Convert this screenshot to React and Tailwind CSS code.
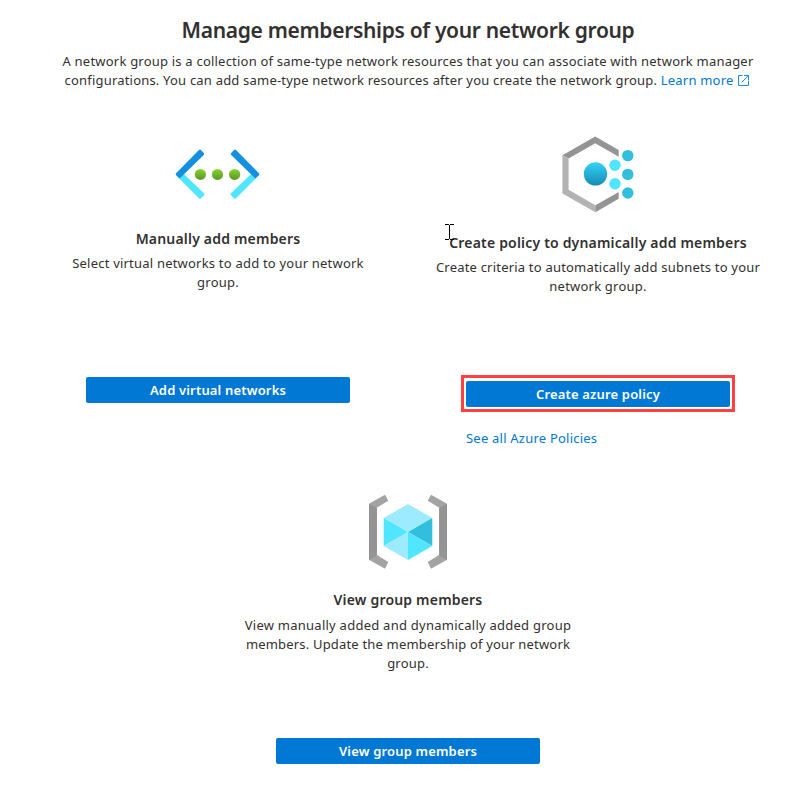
function VirtualNetworkIcon() {
  return (
    <svg width="110" height="80" viewBox="-1 -1 108 80" preserveAspectRatio="none" className="block">
      <defs>
        <linearGradient id="dot" x1="0" y1="0" x2="0" y2="1">
          <stop offset="0" stopColor="#86d633" />
          <stop offset="1" stopColor="#5e9624" />
        </linearGradient>
      </defs>
      <path d="M11.7 40.3 L34.3 63.3 Q35.3 64.2 36.3 63.2 L39.3 60.2 Q40.2 59.2 39.2 58.2 L19.5 39 L15 39Z" fill="#50e6ff" />
      <path d="M93.3 40.3 L70.7 63.3 Q69.7 64.2 68.7 63.2 L65.7 60.2 Q64.8 59.2 65.8 58.2 L85.5 39 L90 39Z" fill="#50e6ff" />
      <path d="M34.3 15 Q35.3 14 36.3 15 L39 18 Q40 19 39 20 L15.3 43.6 L11.8 40.1 Q11 39.2 11.8 38.3Z" fill="#1490df" />
      <path d="M70.7 15 Q69.7 14 68.7 15 L66 18 Q65 19 66 20 L89.7 43.6 L93.2 40.1 Q94 39.2 93.2 38.3Z" fill="#1490df" />
      <circle cx="35.7" cy="39.4" r="5.5" fill="url(#dot)" />
      <circle cx="52.5" cy="39.4" r="5.5" fill="url(#dot)" />
      <circle cx="69.3" cy="39.4" r="5.5" fill="url(#dot)" />
    </svg>
  );
}

function PolicyIcon() {
  return (
    <svg width="100" height="80" viewBox="-2 9 100 80" className="block">
      <defs>
        <linearGradient id="core" x1="0" y1="0" x2="0" y2="1">
          <stop offset="0" stopColor="#32d4f5" />
          <stop offset="1" stopColor="#198ab3" />
        </linearGradient>
      </defs>
      <path d="M12.4 30.3 L45.2 11.5 L68.7 25 V31.8 L45.2 18.3 L18.6 33.6Z" fill="#949494" />
      <path d="M12.4 30.3 L18.6 33.8 V64.7 L45.4 80.3 V87.3 L12.4 68.4Z" fill="#b3b3b3" />
      <path d="M45.4 80.3 L68.7 67 V73.8 L45.4 87.3Z" fill="#949494" />
      <circle cx="45.5" cy="48.9" r="11.7" fill="url(#core)" />
      <circle cx="65" cy="40.3" r="5.7" fill="#50e6ff" />
      <circle cx="65" cy="58.8" r="5.7" fill="#50e6ff" />
      <circle cx="77.8" cy="30.6" r="5.7" fill="#32bedd" />
      <circle cx="77.8" cy="49.4" r="5.7" fill="#32bedd" />
      <circle cx="77.8" cy="68" r="5.7" fill="#32bedd" />
    </svg>
  );
}

function ResourceGroupIcon() {
  return (
    <svg width="110" height="80" viewBox="-2 7 110 80" className="block">
      <path d="M14 18.7 L30 9.8 L33.3 15.8 L22 22.4 V70 L33.3 77 L30 83.8 L14 74.7Z" fill="#a3a3a3" />
      <path d="M14 18.7 L21.8 23 V70.5 L14 74.7Z" fill="#949494" />
      <path d="M92 18.7 L76 9.8 L72.7 15.8 L84 22.4 V70 L72.7 77 L76 83.8 L92 74.7Z" fill="#a3a3a3" />
      <path d="M92 18.7 L84.2 23 V70.5 L92 74.7Z" fill="#949494" />
      <path d="M53 19 L77.3 33 L53 47 L28.7 33Z" fill="#9cebff" />
      <path d="M28.7 33 L53 47 L28.7 61Z" fill="#50e6ff" />
      <path d="M77.3 33 V61 L53 47Z" fill="#32bedd" />
      <path d="M28.7 61 L53 47 V75Z" fill="#9cebff" />
      <path d="M77.3 61 L53 47 V75Z" fill="#50e6ff" />
    </svg>
  );
}

function Heading({ children, className }) {
  return <h2 className={`h-5 text-center text-sm leading-5 font-semibold tracking-[0.19px] whitespace-nowrap ${className}`}>{children}</h2>;
}

function Line({ children, className = "tracking-[0.21px]" }) {
  return <span className={`block whitespace-nowrap ${className}`}>{children}</span>;
}

function Button({ children, className = "" }) {
  return (
    <button className={`flex h-[26px] w-[264px] items-center justify-center rounded-[2px] bg-[#0078d4] pt-[2px] text-[13px] font-semibold tracking-[0.17px] whitespace-nowrap text-white ${className}`}>
      {children}
    </button>
  );
}

export default function App() {
  return (
    <main className="relative h-[797px] w-[808px] overflow-hidden bg-white pt-4 pl-7 font-['Noto_Sans','Open_Sans',sans-serif] text-[#323130]">
      <header className="w-[760px] text-center">
        <h1 className="h-9 text-[21px] leading-[28px] font-semibold tracking-[-0.32px] whitespace-nowrap">Manage memberships of your network group</h1>
        <p className="text-[13px] leading-[19px]">
          <Line>A network group is a collection of same-type network resources that you can associate with network manager</Line>
          <Line className="pr-[3px] tracking-[0.2px]">
            configurations. You can add same-type network resources after you create the network group.{" "}
            <a className="text-[#0078d4]">
              Learn more
              <svg width="11" height="11" viewBox="0 0 11 11" className="ml-[4px] inline-block align-[-1px]" fill="none" stroke="#0078d4" strokeOpacity="0.85">
                <path d="M4.5 .5H.5V10.5H10.5V5.5M6 .5H10.5V5M10.5 .5L3.5 7.5" />
              </svg>
            </a>
          </Line>
        </p>
      </header>

      <div className="mt-[44px] grid h-[358px] w-[760px] grid-cols-2">
        <section className="flex flex-col items-center">
          <VirtualNetworkIcon />
          <Heading className="mt-[15px]">Manually add members</Heading>
          <p className="mt-[5px] text-center text-[13px] leading-[19px]">
            <Line>Select virtual networks to add to your network</Line>
            <Line>group.</Line>
          </p>
          <Button className="mt-[85px]">Add virtual networks</Button>
        </section>
        <section className="flex flex-col items-center">
          <PolicyIcon />
          <Heading className="mt-[19px]">Create policy to dynamically add members</Heading>
          <p className="mt-[5px] text-center text-[13px] leading-[19px]">
            <Line className="tracking-[0.2px]">Create criteria to automatically add subnets to your</Line>
            <Line>network group.</Line>
          </p>
          <div className="mt-[79px] flex h-[37px] w-[274px] items-center justify-center border-[3px] border-[#ff4040]">
            <Button>Create azure policy</Button>
          </div>
          <a className="mt-[16px] w-[264px] text-[13px] leading-5 tracking-[0.22px] text-[#0078d4]">See all Azure Policies</a>
        </section>
      </div>

      <section className="flex w-[760px] flex-col items-center">
        <ResourceGroupIcon />
        <Heading className="mt-[18px]">View group members</Heading>
        <p className="mt-[6px] text-center text-[13px] leading-[19px]">
          <Line className="tracking-[0.25px]">View manually added and dynamically added group</Line>
          <Line className="tracking-[0.18px]">members. Update the membership of your network</Line>
          <Line>group.</Line>
        </p>
        <Button className="mt-[65px]">View group members</Button>
      </section>

      <svg width="9" height="16" viewBox="0 0 9 16" className="absolute top-[224px] left-[445px]" fill="none" stroke="#000" shapeRendering="crispEdges">
        <path d="M0 .5H4M5 .5H9M4.5 1V15M0 15.5H4M5 15.5H9" />
      </svg>
    </main>
  );
}
